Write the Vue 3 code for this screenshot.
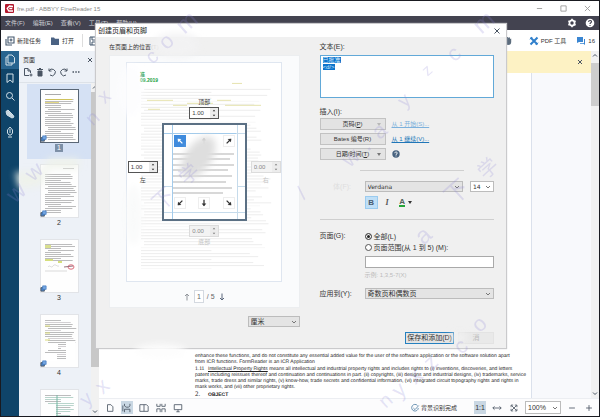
<script setup>
import { ref } from 'vue'

const menus = ['文件(F)', '编辑(E)', '查看(V)', '工具(T)', '帮助(H)']
const text = ref('已批准\n<d/>')
const top = ref('1.00')
const left = ref('1.00')
const range = ref('all')
const rangeText = ref('')

function lines(seed, count, y0, step, x0, width) {
  let s = seed
  const rnd = () => ((s = (s * 9301 + 49297) % 233280) / 233280)
  return Array.from({ length: count }, (_, i) => {
    const r = rnd()
    return { x: x0 + (r > 0.8 ? 3 : 0), y: y0 + i * step, w: width * (r < 0.2 ? 0.55 : 0.85 + 0.15 * rnd()) }
  })
}

const pageLines = lines(17, 61, 26, 3, 14, 128)
const yellowLines = [
  [105, 20, 10], [20, 37, 26], [90, 37, 14], [46, 42, 14], [98, 42, 36], [21, 46, 12], [60, 40, 26],
]
const frameLines = [29, 34, 40, 45, 51, 57, 63, 68]
const frameWidths = [62, 58, 62, 56, 60, 54, 60, 51]

const thumbs = [
  { n: 1, label: '1', lines: lines(5, 21, 9, 2, 4, 29), current: true },
  { n: 2, label: '2', lines: lines(9, 20, 9, 2, 4, 29) },
  { n: 3, label: '3', lines: lines(13, 9, 4, 2, 4, 29), stamp: true },
  { n: 4, label: '4', lines: lines(21, 20, 5, 2, 4, 29), table: true },
  { n: 5, label: '', lines: lines(33, 20, 5, 2, 4, 29), green: true },
]

const anchors = [
  { id: 'tl', label: '左上', angle: -45, active: true },
  { id: 'tc', label: '中上', angle: 0, faded: true },
  { id: 'tr', label: '右上', angle: 45 },
  { id: 'bl', label: '左下', angle: -135 },
  { id: 'bc', label: '中下', angle: 180 },
  { id: 'br', label: '右下', angle: 135 },
]

const marks = [
  ['m', 184, 34, 24], ['o', 166, 50, 22], ['c', 152, 64, 20], ['.', 140, 78, 22], ['x', 104, 104, 20], ['n', 92, 126, 20],
  ['w', 32, 182, 22], ['w', 14, 204, 24], ['下', 160, 212, 22], ['学', 186, 186, 20],
  ['m', 482, 34, 24], ['c', 455, 62, 22], ['z', 428, 76, 16], ['y', 405, 108, 20], ['a', 380, 140, 22], ['.', 368, 152, 24], ['w', 350, 168, 22],
  ['下', 454, 206, 24], ['学', 486, 180, 20], ['a', 424, 246, 24], ['/', 304, 200, 20],
  ['y', 86, 408, 20], ['x', 102, 396, 22], ['n', 386, 410, 20], ['y', 400, 400, 22], ['x', 416, 386, 24], ['z', 432, 372, 22], ['c', 462, 356, 22], ['o', 480, 334, 22],
]
</script>

<template>
  <div class="window">
    <header class="titlebar">
      <svg class="i10" viewBox="0 0 10 10"><rect x="0" y="0" width="9" height="9" rx="1" fill="#b3182d" /><path d="M8 2.5 4.5 2 2.2 4.4 3.8 7 8 7M4.3 4.5h3" fill="none" stroke="#fff" stroke-width="1.3" /></svg>
      <span>fre.pdf - ABBYY FineReader 15</span>
      <div class="winbtns">
        <button aria-label="最小化"><svg viewBox="0 0 8 8"><path d="M1 4h6" /></svg></button>
        <button aria-label="最大化"><svg viewBox="0 0 8 8"><path d="M1 1h6v6H1z" /></svg></button>
        <button aria-label="关闭"><svg viewBox="0 0 8 8"><path d="m1 1 6 6m0-6L1 7" /></svg></button>
      </div>
    </header>

    <nav class="menubar">
      <button v-for="m in menus" :key="m">{{ m }}</button>
      <span class="grow"></span>
      <button aria-label="设置"><svg class="i10" viewBox="0 0 10 10"><circle cx="5" cy="5" r="2.6" fill="none" stroke="#fff" stroke-width="1.8" /><path d="M5 .8v1.4M5 7.8v1.4M1.4 2.9l1.2.7M7.4 6.4l1.2.7M1.4 7.1l1.2-.7M7.4 3.6l1.2-.7" stroke="#fff" stroke-width="1.6" /></svg></button>
      <button aria-label="帮助"><svg class="i10" viewBox="0 0 10 10"><circle cx="5" cy="5" r="4.3" fill="#fff" /><path d="M3.6 4c0-2 2.9-2 2.9-.2C6.5 4.8 5 4.8 5 6M5 6.9v1" fill="none" stroke="#434350" stroke-width="1.1" /></svg></button>
    </nav>

    <div class="toolbar">
      <button class="tool"><svg class="i10" viewBox="0 0 10 10"><path d="M3 1h6v6H3zM1 3v6h6M6 2.5v3M4.5 4h3" fill="none" stroke="#42566c" stroke-width="1.1" /></svg>新建任务</button>
      <button class="tool open"><svg class="i10" viewBox="0 0 10 10"><path d="M1 1.5h3l1 1.3h4V9H1z" fill="#4a6283" /></svg>打开</button>
      <i class="vsep"></i>
      <button class="tool" aria-label="保存"><svg class="i10" viewBox="0 0 10 10"><path d="M1 1h7l1 1v7H1zM3 1v3h4V1M3 9V6h4v3" fill="none" stroke="#42566c" /></svg></button>
      <span class="grow"></span>
      <button class="tool" aria-label="抓手"><svg class="i10" viewBox="0 0 10 10"><path d="M2 5V3l1-1 .5 1L4 1h1l.5 1L6.5 1l.7 2 1-.5V6c0 2-1 3-3 3S3 8 1 5z" fill="#5c6c7d" /></svg></button>
      <button class="tool pdf"><svg class="i10" viewBox="0 0 10 10"><path d="m1.5 1.5 7 7M8.5 1.5l-7 7" stroke="#2f7fcb" stroke-width="2" /><path d="M1 3.3 3.3 1M6.7 9 9 6.7" stroke="#2f7fcb" /></svg>PDF 工具</button>
      <button class="tool chat"><svg class="i10" viewBox="0 0 10 10"><path d="M1 1h6v5H3L1 7z" fill="#3b86d2" /><path d="M8 3h1v6L7.5 7.8H4V7h4z" fill="#3b86d2" /></svg>16</button>
    </div>

    <div class="body">
      <nav class="rail">
        <button class="on" aria-label="页面"><svg viewBox="0 0 12 12"><path d="M4 1h4l2.5 2.5V9H4zM4 3H2v8h6V9" /></svg></button>
        <button aria-label="书签"><svg viewBox="0 0 12 12"><path d="M3 2h6v8.5L6 8l-3 2.5z" /></svg></button>
        <button aria-label="搜索"><svg viewBox="0 0 12 12"><circle cx="5.5" cy="5.5" r="3" /><path d="m8 8 2.5 2.5" /></svg></button>
        <button aria-label="附件"><svg viewBox="0 0 12 12"><path d="M2 3.5 4 2l5 5 1 2-2 1-5-3zM4 4l4 4" fill="#c3d4de" /></svg></button>
        <button aria-label="签名"><svg viewBox="0 0 12 12"><path d="M6 1 3.5 4v3L5 9h2l1.5-2V4zM6 3v4M4 11h4" /></svg></button>
      </nav>

      <aside class="pages">
        <div class="phead"><span>页面</span><button aria-label="关闭面板"><svg class="i8" viewBox="0 0 8 8"><path d="m2 2 4 4m0-4L2 6" /></svg></button></div>
        <div class="ptools">
          <button aria-label="添加页面"><svg class="i10" viewBox="0 0 10 10"><path d="M6 8.5H1.5v-7H5L7.5 4v2M5 1.5V4h2.5M8 6.5v3M6.5 8h3" /></svg></button>
          <button aria-label="删除"><svg class="i10" viewBox="0 0 10 10"><path d="M2 2.5h6M4 1.5h2" /><path d="M3 4h4v5H3z" fill="#4a5563" /></svg></button>
          <button aria-label="左转"><svg class="i10" viewBox="0 0 10 10"><path d="M2 1.5V4h2.5M2 4a3.3 3.3 0 1 1 1 4" /></svg></button>
          <button aria-label="右转"><svg class="i10" viewBox="0 0 10 10"><path d="M8 1.5V4H5.5M8 4a3.3 3.3 0 1 0-1 4" /></svg></button>
          <button aria-label="更多"><svg class="i10" viewBox="0 0 10 10"><path d="M1.5 5h1.5M4.3 5h1.5M7 5h1.5" stroke-width="1.5" /></svg></button>
        </div>
        <div class="plist">
          <div class="thumbs">
            <button v-for="t in thumbs" :key="t.n" class="thumb" :class="{ current: t.current }">
              <svg class="sheet" viewBox="0 0 37 52">
                <rect width="37" height="52" fill="#fefefe" />
                <rect v-for="(l, i) in t.lines" :key="i" :x="l.x" :y="l.y" :width="l.w" height="1" :fill="t.green && i % 3 ? '#b9d5cc' : t.table && i % 4 === 1 ? '#d3d0d3' : '#bcbcbd'" />
                <g v-if="t.current"><rect x="4" y="4" width="16" height="1" fill="#aaa" /><rect x="5" y="9" width="26" height="1" fill="#cfc25c" /><rect x="4" y="12" width="14" height="1" fill="#e4d985" /></g>
                <g v-if="t.n === 2"><rect x="22" y="3" width="11" height="1" fill="#bbb" /></g>
                <g v-if="t.stamp"><rect x="4" y="5" width="6" height="3" fill="#d9df90" /><rect x="4" y="19" width="8" height="2" fill="#d6df7c" /><rect x="17" y="21" width="4" height="2" fill="#d6df7c" /><path d="M7 27c2-3 3 2 5-1s4 1 6 0M4 31h22" fill="none" stroke="#ccc" stroke-width=".7" /><ellipse cx="30" cy="27" rx="3" ry="2.2" fill="none" stroke="#dd6b7b" /><path d="m23 27 9-1" stroke="#95707e" /></g>
                <g v-if="t.table"><path d="M4 11h5M4 18h5M4 25h5" stroke="#dcdc79" /><rect x="3" y="29" width="14" height="6" fill="#fff" /><rect x="25" y="27" width="9" height="18" fill="#fff" /><rect x="3" y="38" width="13" height="8" fill="#fff" /></g>
                <g v-if="t.green"><rect x="3" y="14" width="12" height="38" fill="#fefefe" /><path d="M16 5v44" stroke="#75b6a2" /></g>
              </svg>
              <svg class="badge" viewBox="0 0 8 8"><path d="M1 3h4v4H1z" fill="#4c84c6" /><path d="M3 1h4v4H3z" fill="#76a7e2" stroke="#3d78bf" stroke-width=".8" /></svg>
              <span v-if="t.label">{{ t.label }}</span>
            </button>
          </div>
          <div class="vscroll"><svg viewBox="0 0 8 6"><path d="m2 4 2-2 2 2" /></svg><i></i><svg viewBox="0 0 8 6"><path d="m2 2 2 2 2-2" /></svg></div>
        </div>
      </aside>

      <main class="main">
        <div class="docrow">
          <div class="doc">
            <div class="notice"><button aria-label="关闭通知"><svg class="i8" viewBox="0 0 8 8"><path d="m2 2 4 4m0-4L2 6" /></svg></button></div>
            <div class="canvas">
              <article class="paper">
                <p>enhance these functions, and do not constitute any essential added value for the user of the software application or the software solution apart<br>from ICR functions. FormReader is an ICR Application</p>
                <p><span class="num">1.11</span><u>Intellectual Property Rights</u> means all intellectual and industrial property rights and includes rights to (i) inventions, discoveries, and letters<br>patent including reissues thereof and continuation and continuations in part. (ii) copyrights, (iii) designs and industrial designs, (iv) trademarks, service<br>marks, trade dress and similar rights, (v) know-how, trade secrets and confidential information, (vi) integrated circuit topography rights and rights in<br>mask works, and (vii) other proprietary rights.</p>
                <p class="object"><span class="num">2.</span><b>OBJECT</b></p>
              </article>
            </div>
          </div>
          <div class="vscroll docscroll"><svg viewBox="0 0 8 6"><path d="m2 4 2-2 2 2" /></svg><i></i><svg viewBox="0 0 8 6"><path d="m2 2 2 2 2-2" /></svg></div>
        </div>
        <footer class="status">
          <button aria-label="单页"><svg viewBox="0 0 12 12"><path d="M3 2h4l2.5 2.5V10H3z" /></svg></button>
          <button class="on" aria-label="连续"><svg viewBox="0 0 12 12"><path d="M3 1v2.5L5 5h3l1.5-1.5V1M3 11V7.5h6.5V11M1 3v7" /></svg></button>
          <button aria-label="双页"><svg viewBox="0 0 12 12"><path d="M1 2h5v8H1zM6 2h3l2 2v6H6" /></svg></button>
          <button aria-label="双页连续"><svg viewBox="0 0 12 12"><path d="M1 1v3h4V1M7 1v3h4V1M1 11V7h4v4M7 11V7h4v4" /></svg></button>
          <button aria-label="全屏"><svg viewBox="0 0 12 12"><path d="M1.5 2h9v6h-9zM6 8v2.5M4 10.5h4" /></svg></button>
          <span class="grow"></span>
          <span class="done"><svg viewBox="0 0 12 12"><path d="M9 3a4 4 0 1 0 1 3M4 6l2 2 4.5-5" stroke="#507fa5" /></svg>背景识别完成</span>
          <button class="on one">1:1</button>
          <button class="wide" aria-label="适合宽度"><svg viewBox="0 0 12 12"><path d="M1 6h10M3 4 1 6l2 2M9 4l2 2-2 2" /></svg></button>
          <button class="wide" aria-label="适合页面"><svg viewBox="0 0 12 12"><path d="m3 3 6 6M9 3 3 9M2.5 5V2.5H5M7 2.5h2.5V5M2.5 7v2.5H5M7 9.5h2.5V7" /></svg></button>
          <span class="sel zoom"><select aria-label="缩放"><option>100%</option></select><svg viewBox="0 0 8 6"><path d="m2 2 2 2 2-2" /></svg></span>
          <button class="wide" aria-label="缩小"><svg viewBox="0 0 12 12"><path d="M2.5 6h7" /></svg></button>
          <button class="wide" aria-label="放大"><svg viewBox="0 0 12 12"><path d="M2.5 6h7M6 2.5v7" /></svg></button>
        </footer>
      </main>
    </div>

    <section class="dialog" role="dialog" aria-labelledby="dlg-title">
      <header class="dtitle"><h1 id="dlg-title">创建页眉和页脚</h1><button aria-label="关闭对话框"><svg class="i8" viewBox="0 0 8 8"><path d="m1.5 1.5 5 5m0-5-5 5" /></svg></button></header>
      <div class="dbody">
        <div class="leftcol">
          <p class="loc">在页面上的位置<span>(T)</span></p>
          <div class="preview">
            <div class="page">
              <svg class="pagebg" viewBox="0 0 154 219" preserveAspectRatio="none">
                <rect v-for="(l, i) in pageLines" :key="i" :x="l.x" :y="l.y" :width="l.w" height="1" :fill="i % 7 === 4 ? '#f8f8f8' : '#ededed'" />
                <rect v-for="(y, i) in yellowLines" :key="'y' + i" :x="y[0]" :y="y[1]" :width="y[2]" height="1" fill="#e6e3ae" />
                <text x="13" y="13" class="stamp">准</text>
                <text x="13" y="19" class="stamp">09.2019</text>
              </svg>
              <div class="place">
                <label class="edge north"><span>顶部</span><span class="spin"><input v-model="top"><svg viewBox="0 0 8 12"><path d="M2.5 4 4 2l1.5 2zM2.5 8 4 10l1.5-2z" /></svg></span></label>
                <label class="edge west"><span class="spin"><input v-model="left"><svg viewBox="0 0 8 12"><path d="M2.5 4 4 2l1.5 2zM2.5 8 4 10l1.5-2z" /></svg></span><span>左</span></label>
                <div class="frame">
                  <svg class="guides" viewBox="0 0 81 94" preserveAspectRatio="none">
                    <rect v-for="(y, i) in frameLines" :key="i" x="8" :y="y - 1" :width="frameWidths[i]" height="2" fill="#d8d8d8" />
                    <path d="M8.5 0v94M73.5 0v94M0 8.5h81M0 61.5h8M73 61.5h8M0 87.5h81" stroke="#c6dbeb" fill="none" />
                    <path d="M8.5 0v94M0 8.5h72" stroke="#a3cbeb" fill="none" />
                  </svg>
                  <button v-for="a in anchors" :key="a.id" :class="{ active: a.active, faded: a.faded }" :aria-label="a.label">
                    <svg viewBox="0 0 12 12"><g :transform="`rotate(${a.angle} 6 6)`"><path d="M6 10V3" /><path d="M3.2 5.5 6 2l2.8 3.5z" class="tip" /></g></svg>
                  </button>
                </div>
                <label class="edge east off"><span class="spin"><input value="0.00" disabled><svg viewBox="0 0 8 12"><path d="M2.5 4 4 2l1.5 2zM2.5 8 4 10l1.5-2z" /></svg></span><span>右</span></label>
                <label class="edge south off"><span class="spin"><input value="0.00" disabled><svg viewBox="0 0 8 12"><path d="M2.5 4 4 2l1.5 2zM2.5 8 4 10l1.5-2z" /></svg></span><span>底部</span></label>
              </div>
            </div>
            <div class="pager">
              <button aria-label="上一页"><svg class="i8" viewBox="0 0 8 8"><path d="M4 7.5V1M2 3l2-2 2 2" stroke="#92969c" /></svg></button>
              <input value="1" aria-label="页码"><span>/ 5</span>
              <button aria-label="下一页"><svg class="i8" viewBox="0 0 8 8"><path d="M4 .5V7M2 5l2 2 2-2" stroke="#59657a" /></svg></button>
            </div>
          </div>
          <div class="units"><span class="sel"><select aria-label="单位"><option>厘米</option></select><svg viewBox="0 0 8 6"><path d="m2 2 2 2 2-2" /></svg></span></div>
        </div>

        <form class="rightcol" @submit.prevent>
          <div class="block textblock">
            <label for="txt">文本(E):</label>
            <div class="area"><textarea id="txt" v-model="text" class="raw"></textarea><div class="selected" aria-hidden="true"><mark>已批准</mark><br><mark>&lt;d/&gt;</mark></div></div>
          </div>
          <div class="block insert">
            <span class="lab">插入(I):</span>
            <div class="inrow"><button class="btn">页码(<u>P</u>)<i class="caret pale"></i></button><a href="#" class="pale">从 1 开始(S)...</a></div>
            <div class="inrow"><button class="btn">Bates 编号(R)</button><a href="#">从 1 继续(V)...</a></div>
            <div class="inrow"><button class="btn">日期/时间(<u>T</u>)<i class="caret"></i></button><svg class="i8" viewBox="0 0 8 8"><circle cx="4" cy="4" r="3.7" fill="#47627f" stroke="none" /><path d="M2.8 3.2c0-1.6 2.5-1.6 2.4-.1C5.2 4 4 4 4 4.9M4 5.5v.9" stroke="#fff" /></svg></div>
          </div>
          <hr class="short">
          <div class="row font">
            <span class="ghost">体(F):</span>
            <div class="fontbox">
              <div class="fonts">
                <span class="sel"><select class="verdana" aria-label="字体"><option>Verdana</option></select><svg viewBox="0 0 8 6"><path d="m2 2 2 2 2-2" /></svg></span>
                <span class="sel size"><select class="verdana" aria-label="字号"><option>14</option></select><svg viewBox="0 0 8 6"><path d="m2 2 2 2 2-2" /></svg></span>
              </div>
              <div class="styles">
                <button class="bold">B</button><button class="ital">I</button><button class="color"><span>A</span><i class="caret"></i></button>
              </div>
            </div>
          </div>
          <hr>
          <div class="row scope">
            <span>页面(G):</span>
            <div class="opts">
              <label><input v-model="range" type="radio" value="all">全部(L)</label>
              <label><input v-model="range" type="radio" value="range">页面范围(从 1 到 5) (M):</label>
              <input v-model="rangeText" class="rangebox" aria-label="页面范围">
              <span class="hint">示例: 1,3,5-7(X)</span>
            </div>
          </div>
          <div class="row apply">
            <label for="apply">应用到(Y):</label>
            <span class="sel"><select id="apply"><option>奇数页和偶数页</option></select><svg viewBox="0 0 8 6"><path d="m2 2 2 2 2-2" /></svg></span>
          </div>
          <div class="actions"><button class="btn save">保存和添加(D)</button><button class="btn cancel">消</button></div>
        </form>
      </div>
    </section>

    <svg class="overlay" viewBox="0 0 600 417" preserveAspectRatio="none" aria-hidden="true">
      <defs><filter id="soft" x="-50%" y="-50%" width="200%" height="200%"><feGaussianBlur stdDeviation="4" /></filter></defs>
      <g filter="url(#soft)">
        <ellipse cx="198" cy="157" rx="13" ry="24" transform="rotate(35 198 157)" fill="#dedede" />
        <ellipse cx="130" cy="90" rx="12" ry="26" fill="#fcfdfe" opacity=".8" />
        <ellipse cx="133" cy="215" rx="8" ry="30" fill="#f8f9fa" opacity=".9" />
        <ellipse cx="176" cy="44" rx="24" ry="12" fill="#f2f2f3" opacity=".9" />
        <path d="M14 172h26l8-14h30v10H48l-8 18-22 2z" fill="#eef2ea" opacity=".9" />
        <ellipse cx="160" cy="352" rx="26" ry="7" fill="#fdfdfd" />
        <ellipse cx="460" cy="338" rx="8" ry="6" fill="#f0f0f0" />
      </g>
      <text v-for="(m, i) in marks" :key="i" :x="m[1]" :y="m[2]" :font-size="m[3]" :transform="`rotate(-42 ${m[1]} ${m[2]})`">{{ m[0] }}</text>
    </svg>
  </div>
</template>

<style>
body { margin: 0; background: #20232b; }
</style>

<style scoped>
* { box-sizing: border-box; }
.window { position: relative; display: flex; flex-direction: column; height: 100vh; min-height: 400px; border: 1px solid #191a20; overflow: hidden; background: #fff; color: #333; font: 7px/8px "Liberation Sans", "Noto Sans CJK SC", sans-serif; }
button, input, select, textarea { font: inherit; color: inherit; margin: 0; padding: 0; border: 0; background: none; border-radius: 0; min-width: 0; }
button { display: flex; align-items: center; justify-content: center; white-space: nowrap; }
svg { display: block; fill: none; stroke: #4a5563; flex: none; }
p, h1 { margin: 0; font-size: inherit; font-weight: normal; }
.grow { flex: 1; }
.i10 { width: 10px; height: 10px; stroke: none; }
.i8 { width: 8px; height: 8px; }
.titlebar { flex: none; display: flex; align-items: center; height: 15px; padding: 0 8px 0 4px; gap: 2px; color: #888; font-size: 6px; }
.winbtns { margin-left: auto; display: flex; gap: 17px; }
.winbtns svg { width: 7px; height: 7px; stroke: #999; }
.menubar { flex: none; display: flex; align-items: center; height: 14px; padding: 0 4px; gap: 8px; background: #434350; color: #d2d2d7; font-size: 6px; }
.menubar button { min-width: 10px; }
.toolbar { flex: none; display: flex; align-items: center; height: 21px; padding: 0 4px; color: #333; font-size: 6px; background: #fff; }
.tool { gap: 2px; }
.open { margin-left: 9px; }
.vsep { width: 1px; height: 13px; margin: 0 6px 0 8px; background: #ddd; }
.pdf { margin: 0 10px 0 16px; }
.body { flex: 1; min-height: 0; display: flex; }
.rail { flex: none; width: 18px; background: #0f4469; }
.rail button { width: 100%; height: 18px; }
.rail .on { background: #28648f; }
.rail svg { width: 12px; height: 12px; stroke: #d3e0e8; }
.pages { flex: none; width: 80px; display: flex; flex-direction: column; background: #edf1f7; }
.phead { display: flex; justify-content: space-between; align-items: center; padding: 5px 5px 0 4px; font-size: 6px; }
.ptools { display: flex; gap: 2px; padding: 3px 4px 5px; border-bottom: 1px solid #dde2e8; }
.ptools svg { stroke: #4a5563; }
.plist { flex: 1; min-height: 0; display: flex; }
.thumbs { flex: 1; overflow: hidden; padding: 1px 0 0 8px; }
.thumb { position: relative; width: 100%; height: 75px; flex-direction: column; justify-content: flex-start; padding-top: 6px; gap: 2px; }
.thumb.current { background: #d5e1f4; background-clip: content-box; box-shadow: inset 0 6px #d5e1f4; }
.sheet { width: 37px; height: 52px; stroke: none; outline: 1px solid #e2e4e8; }
.current .sheet { outline: 1px solid #596675; }
.current span { background: #7c8fa6; color: #fff; padding: 0 2px; }
.badge { position: absolute; left: 13px; top: 51px; width: 7px; height: 7px; }
.vscroll { flex: none; width: 8px; display: flex; flex-direction: column; align-items: center; background: #f1f1f1; }
.vscroll i { flex: 1; width: 100%; background: #c8c8c8; margin-bottom: 40px; }
.vscroll svg { width: 8px; height: 9px; }
.main { flex: 1; min-width: 0; display: flex; flex-direction: column; }
.docrow { flex: 1; min-height: 0; display: flex; }
.doc { flex: 1; min-width: 0; display: flex; flex-direction: column; }
.docscroll i { flex: none; height: 43px; margin: 3px 0 auto; background: #cdcdcd; }
.notice { flex: none; height: 22px; display: flex; align-items: center; justify-content: flex-end; padding-right: 7px; background: #fdf2c4; }
.canvas { flex: 1; min-height: 0; display: flex; background: #f8f9fc; }
.paper { flex: 1; margin-right: 59px; border-right: 1px solid #dbe1ec; display: flex; flex-direction: column; justify-content: flex-end; gap: 1px; padding-left: 96px; background: #fff; color: #222; font: 5px/6px "Liberation Sans", sans-serif; text-rendering: geometricPrecision; white-space: nowrap; }
.num { display: inline-block; width: 13px; }
.object .num { font-family: "Liberation Serif", serif; font-size: 7px; }
.status { flex: none; height: 18px; display: flex; align-items: center; padding: 0 4px 0 5px; gap: 5px; border-top: 1px solid #eceef2; background: #fcfcfd; }
.status button { width: 12px; height: 13px; }
.status svg { width: 10px; height: 10px; }
.status .on { background: #c9d7e3; }
.status .wide { width: 12px; }
.done { display: flex; align-items: center; gap: 1px; margin-right: 12px; font-size: 6px; white-space: nowrap; }
.sel { position: relative; display: grid; height: 11px; border: 1px solid #bcbcbc; background: #e4e4e4; }
.sel select { width: 100%; height: 100%; padding: 0 10px 0 2px; appearance: none; line-height: 9px; outline: none; }
.sel svg { position: absolute; right: 1px; top: 2px; width: 8px; height: 6px; stroke: #777; }
.zoom { width: 36px; height: 13px; background: #fff; }
.zoom svg { top: 3px; }
.dialog { position: absolute; left: 95px; right: 93px; top: 23px; background: #f0f0f0; box-shadow: 0 0 1px 1px #cacacc; }
.dtitle { display: flex; align-items: center; justify-content: space-between; height: 13px; padding: 0 5px 0 2px; background: #fff; color: #222; }
.dbody { display: flex; gap: 20px; min-height: 311px; padding: 6px 12px 4px 13px; }
.leftcol { flex: 190; display: flex; flex-direction: column; min-width: 0; }
.rightcol { flex: 174; display: flex; flex-direction: column; min-width: 0; }
.loc { height: 12px; font-size: 6px; }
.loc span { color: #ccc; }
.preview { display: flex; flex-direction: column; align-items: center; padding-top: 6px; background: #fafbfc; border: 1px solid #eceef0; height: 253px; }
.page { position: relative; width: 156px; height: 220px; display: grid; place-content: center; background: #fff; border: 1px solid #dfe6f0; }
.pagebg { position: absolute; inset: 0; width: 100%; height: 100%; stroke: none; }
.stamp { fill: #22a040; font: bold 5px "Liberation Sans", "Noto Sans CJK SC", sans-serif; }
.place { position: relative; display: grid; grid-template-columns: 30px 85px 30px; gap: 4px; justify-items: center; align-items: center; }
.edge { display: flex; flex-direction: column; align-items: center; gap: 1px; color: #444; font-size: 6px; }
.north, .south { grid-column: 1 / -1; }
.west, .east { align-self: start; padding-top: 38px; gap: 3px; }
.spin { display: flex; width: 30px; height: 12px; border: 1px solid #555; background: #fff; }
.spin input { flex: 1; width: 0; padding-left: 2px; font-size: 6px; }
.spin svg { width: 8px; height: 10px; fill: #222; stroke: none; background: #ececec; }
.off { color: #c4c4c4; }
.off .spin { border-color: #dcdcdc; background: #f3f3f3; color: #888; }
.off .spin svg { fill: #777; }
.frame { position: relative; width: 85px; height: 98px; padding: 10px; border: 2px solid #5b7084; background: #fff; display: grid; grid-template-columns: repeat(3, 12px); justify-content: space-between; align-content: space-between; }
.guides { position: absolute; inset: 0; width: 100%; height: 100%; stroke: none; }
.frame button { position: relative; width: 12px; height: 12px; border: 1px solid #eee; background: #fff; }
.frame button svg { width: 10px; height: 10px; stroke: #333; stroke-width: 1.5; }
.frame .tip { fill: #333; stroke: none; }
.frame .active { background: #3f8bdd; border-color: #3f8bdd; }
.frame .active svg { stroke: #fff; }
.frame .active .tip { fill: #fff; }
.frame .faded { opacity: .4; border-color: #fff; }
.pager { flex: 1; display: flex; align-items: center; gap: 3px; padding-top: 4px; color: #666; }
.pager input { width: 10px; height: 13px; border: 1px solid #d4d9e0; text-align: center; background: #fff; }
.units { display: flex; justify-content: flex-end; padding-top: 8px; }
.units .sel { width: 52px; }
.block { display: flex; flex-direction: column; }
.textblock label { height: 12px; }
.area { display: grid; height: 43px; border: 1px solid #62a9d8; background: #fff; }
.area > * { grid-area: 1 / 1; }
.raw { width: 100%; height: 100%; padding: 1px 2px; border: 0; resize: none; outline: none; color: transparent; line-height: 7px; font-size: 6px; }
.selected { padding: 1px 2px; line-height: 7px; font-size: 6px; pointer-events: none; }
mark { background: #0c73cc; color: #d4e9fa; }
.insert { gap: 3px; padding-top: 11px; }
.lab { height: 6px; line-height: 6px; }
.inrow { display: flex; align-items: center; gap: 6px; height: 12px; }
.btn { position: relative; width: 66px; height: 12px; border: 1px solid #c2c2c2; background: #e3e3e3; font-size: 7px; }
.insert .btn { font-size: 6px; }
.caret { display: block; width: 0; height: 0; border: 2px solid transparent; border-top: 3px solid #333; border-bottom: 0; }
.btn .caret { position: absolute; right: 4px; top: 4px; border-top-color: #777; }
.caret.pale { opacity: .4; }
a { color: #2076b8; font-size: 6px; }
a.pale { color: #7db1dc; }
hr { width: 100%; height: 1px; margin: 10px 0; border: 0; background: #cfcfcf; }
.short { width: auto; margin-left: 40px; margin-right: 30px; }
.row { display: grid; grid-template-columns: 45px 1fr; }
.ghost { color: #dedede; text-align: center; padding-top: 2px; }
.fontbox { display: grid; gap: 4px; }
.fonts { display: grid; grid-template-columns: 1fr 24px; gap: 7px; }
.verdana { font: 6px/9px "DejaVu Sans", sans-serif; }
.size { background: #fff; }
.styles { display: flex; gap: 3px; }
.styles button { width: 13px; height: 13px; font-size: 8px; }
.styles .bold { background: #bfdff7; border: 1px solid #9acbef; font-weight: bold; color: #485b70; }
.styles .ital { font: italic bold 8px "Liberation Serif", serif; color: #555; }
.styles .color { width: 18px; gap: 3px; font-weight: bold; color: #50605a; }
.color span { border-bottom: 2px solid #24a53a; line-height: 7px; }
.scope { padding-top: 2px; }
.opts { display: grid; }
.opts label { display: flex; align-items: center; gap: 2px; height: 11px; margin-top: -1px; margin-bottom: 1px; }
.opts input[type="radio"] { appearance: none; width: 7px; height: 7px; border: 1px solid #555; border-radius: 50%; background: #fff; }
.opts input[type="radio"]:checked { background: #222; box-shadow: inset 0 0 0 1px #fff; }
.rangebox { height: 12px; margin-top: 2px; border: 1px solid #a9a9a9; background: #fff; }
.hint { padding-top: 3px; color: #bbb; font-size: 6px; }
.apply { align-items: center; padding-top: 9px; }
.actions { display: flex; justify-content: flex-end; gap: 4px; margin-top: auto; }
.save { width: 49px; border: 1px solid #2580bf; }
.cancel { width: 36px; border-color: #e3e3e3; background: #e9e9e9; color: #bbb; }
.overlay { position: absolute; inset: 0; width: 100%; height: 100%; pointer-events: none; stroke: none; }
.overlay text { fill: #8b86d8; fill-opacity: .22; font-family: "Liberation Sans", "Noto Sans CJK SC", sans-serif; }
</style>
